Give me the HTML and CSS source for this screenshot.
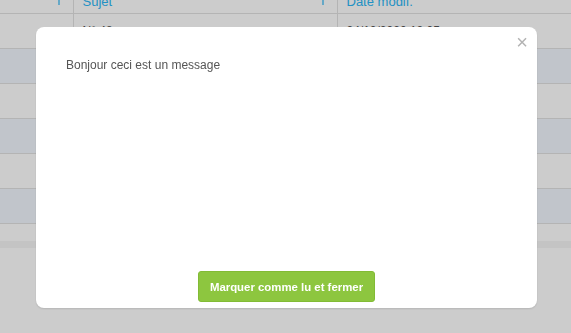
FILE: index.html
```html
<!DOCTYPE html>
<html>
<head>
  <meta charset="UTF-8">
  <title>Messages</title>
  <link rel="stylesheet" href="styles.css">
</head>
<body>
  <div class="list-container">
    <table class="message-table">
      <thead>
        <tr>
          <th class="col-num"><span class="sort-icon"><svg width="6" height="14" viewBox="0 0 6 14"><path d="M3 1v12M1 3l2-2 2 2" stroke="#2cb6f5" stroke-width="1.2" fill="none"/></svg></span></th>
          <th class="col-subject">Sujet <span class="sort-icon"><svg width="6" height="14" viewBox="0 0 6 14"><path d="M3 1v12M1 3l2-2 2 2" stroke="#2cb6f5" stroke-width="1.2" fill="none"/></svg></span></th>
          <th class="col-date">Date modif.</th>
        </tr>
      </thead>
      <tbody>
        <tr><td></td><td>N° 48</td><td>24/10/2020 12:05</td></tr>
        <tr class="striped"><td></td><td>N° 47</td><td>24/10/2020 11:58</td></tr>
        <tr><td></td><td>N° 46</td><td>23/10/2020 17:40</td></tr>
        <tr class="striped"><td></td><td>N° 45</td><td>23/10/2020 09:12</td></tr>
        <tr><td></td><td>N° 44</td><td>22/10/2020 16:31</td></tr>
        <tr class="striped"><td></td><td>N° 43</td><td>22/10/2020 10:03</td></tr>
        <tr class="short"><td></td><td></td><td></td></tr>
      </tbody>
    </table>
    <div class="table-footer"></div>
  </div>

  <!-- Message modal -->
  <div class="overlay">
    <div class="modal">
      <span class="close-modal">&times;</span>
      <div class="modal-body">Bonjour ceci est un message</div>
      <div class="modal-buttons">
        <button class="read-button">Marquer comme lu et fermer</button>
      </div>
    </div>
  </div>
</body>
</html>
```

FILE: styles.css
```css
body {
  margin: 0;
  font-family: "Liberation Sans", Arial, sans-serif;
  background-color: white;
}
.list-container {
  margin-top: -22px;
}
.message-table {
  width: 100%;
  border-collapse: collapse;
  table-layout: fixed;
}
.message-table th, .message-table td {
  height: 35px;
  padding: 0 9px;
  text-align: left;
  border-bottom: 1px solid #e2e2e2;
  border-right: 1px solid #e2e2e2;
  font-size: 12px;
  color: #555;
  box-sizing: border-box;
}
.message-table th:last-child, .message-table td:last-child {
  border-right: none;
}
.message-table th {
  font-size: 13px;
  font-weight: normal;
  color: #2cb6f5;
  position: relative;
  vertical-align: bottom;
  padding-bottom: 4px;
}
.col-num {
  width: 73px;
}
.col-subject {
  width: 264px;
}
.sort-icon {
  position: absolute;
  right: 11px;
  bottom: 4px;
}
.message-table tr.striped td {
  background-color: #f2f7fe;
}
.message-table tr.short td {
  height: 18px;
  border-bottom: none;
}
.table-footer {
  height: 7px;
  background-color: #f6f6f6;
}
.overlay {
  position: fixed;
  top: 0;
  left: 0;
  right: 0;
  bottom: 0;
  background-color: rgba(0, 0, 0, 0.2);
}
.modal {
  position: absolute;
  left: 36px;
  top: 27px;
  width: 501px;
  height: 281px;
  box-sizing: border-box;
  background-color: white;
  border-radius: 8px;
  box-shadow: 0 1px 2px rgba(0, 0, 0, 0.12);
  display: flex;
  flex-direction: column;
  padding: 31px 30px 6px 30px;
}
.close-modal {
  position: absolute;
  right: 9px;
  top: 4px;
  font-size: 20px;
  color: #b3b3b3;
  cursor: pointer;
}
.modal-body {
  flex-grow: 1;
  font-size: 12px;
  color: #555;
}
.modal-buttons {
  display: flex;
  justify-content: center;
}
.read-button {
  width: 177px;
  height: 31px;
  background-color: #8dc63f;
  border: 1px solid #82bb35;
  border-radius: 3px;
  color: white;
  font-family: "Liberation Sans", Arial, sans-serif;
  font-size: 11.4px;
  font-weight: bold;
  cursor: pointer;
}
```
